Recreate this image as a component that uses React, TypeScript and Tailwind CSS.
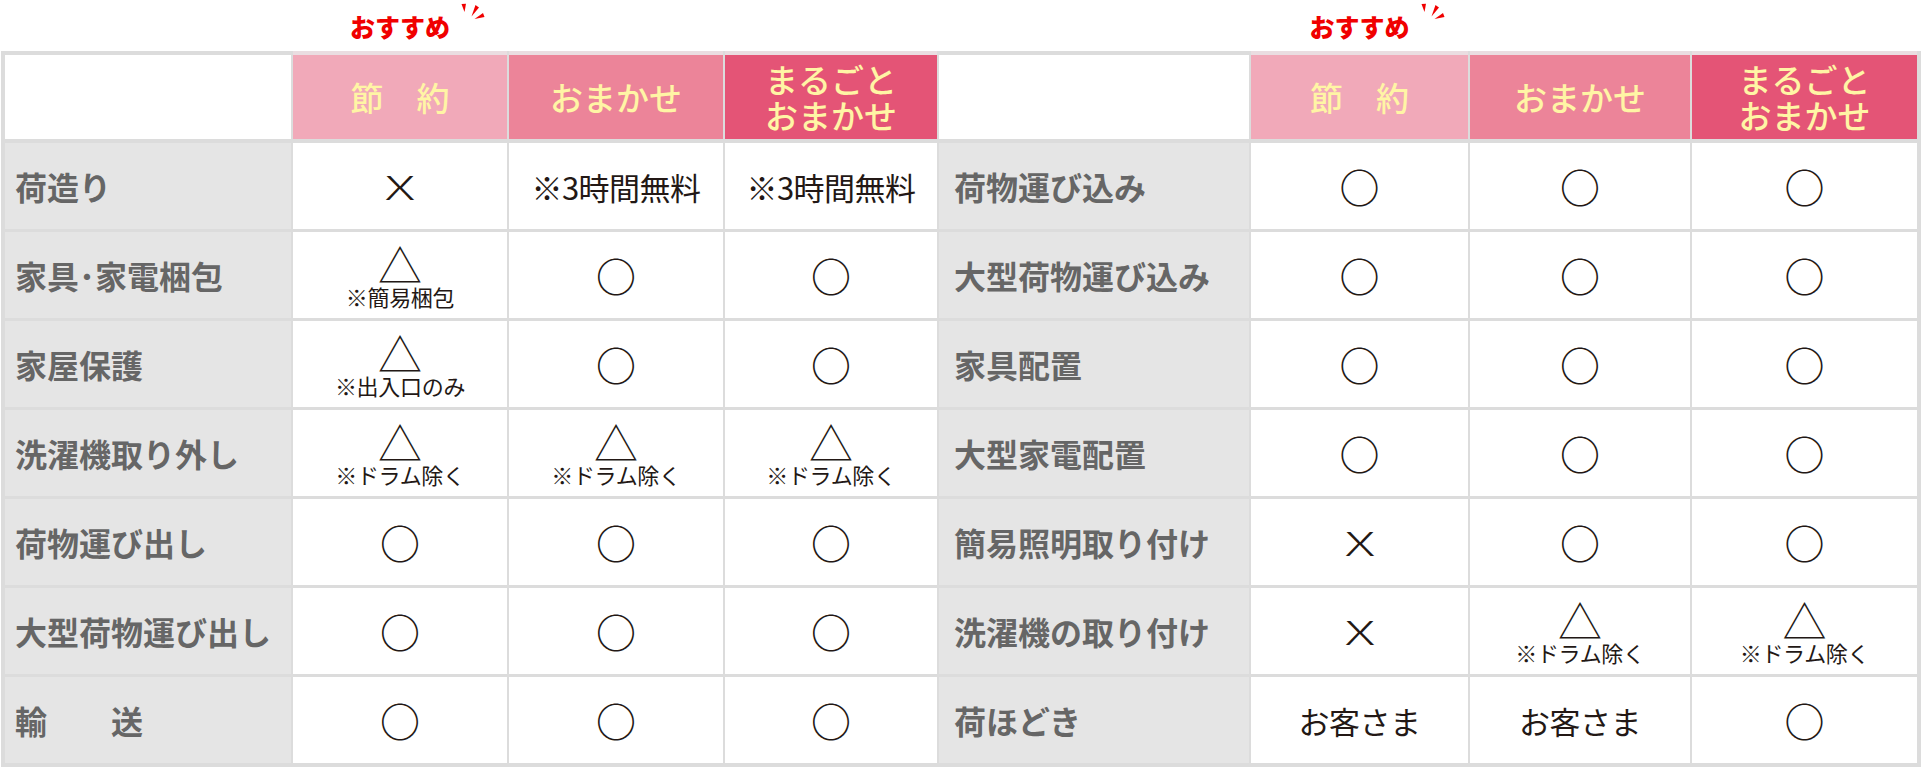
import React from 'react';

// ─── Data ─────────────────────────────────────────────────────────────────────
type Cell =
  | { kind: 'o' }
  | { kind: 'x' }
  | { kind: 't'; note: string }
  | { kind: 'text'; text: string };

const O: Cell = { kind: 'o' };
const X: Cell = { kind: 'x' };
const T = (note: string): Cell => ({ kind: 't', note });
const S = (text: string): Cell => ({ kind: 'text', text });

const LEFT_ROWS: { label: string; cells: Cell[] }[] = [
  { label: '荷造り',         cells: [X, S('※3時間無料'), S('※3時間無料')] },
  { label: '家具･家電梱包',   cells: [T('※簡易梱包'), O, O] },
  { label: '家屋保護',       cells: [T('※出入口のみ'), O, O] },
  { label: '洗濯機取り外し',   cells: [T('※ドラム除く'), T('※ドラム除く'), T('※ドラム除く')] },
  { label: '荷物運び出し',     cells: [O, O, O] },
  { label: '大型荷物運び出し', cells: [O, O, O] },
  { label: '輸　　送',       cells: [O, O, O] },
];

const RIGHT_ROWS: { label: string; cells: Cell[] }[] = [
  { label: '荷物運び込み',     cells: [O, O, O] },
  { label: '大型荷物運び込み', cells: [O, O, O] },
  { label: '家具配置',       cells: [O, O, O] },
  { label: '大型家電配置',     cells: [O, O, O] },
  { label: '簡易照明取り付け', cells: [X, O, O] },
  { label: '洗濯機の取り付け', cells: [X, T('※ドラム除く'), T('※ドラム除く')] },
  { label: '荷ほどき',       cells: [S('お客さま'), S('お客さま'), O] },
];

const COLS = 'grid grid-cols-[286px_214px_214px_212px_310px_217px_220px_225px] gap-x-[2px]';
const FONT = "[font-family:'Noto_Sans_CJK_JP','Noto_Sans',sans-serif]";

// ─── Pieces ───────────────────────────────────────────────────────────────────
function Recommend() {
  return (
    <span className="relative text-[25px] leading-none font-black text-[#f00000]">
      おすすめ
      <svg
        className="absolute left-[calc(100%+7px)] -top-[12px]"
        width="30"
        height="20"
        viewBox="0 0 30 20"
      >
        <polygon points="7.5,10 4.5,2 9,1.8" fill="#f00000" />
        <polygon points="14.5,14.5 18.5,3 22,5.5" fill="#f00000" />
        <polygon points="17.5,17 26,11 27.5,15" fill="#f00000" />
      </svg>
    </span>
  );
}

function Mark({ cell }: { cell: Cell }) {
  if (cell.kind === 'o') {
    return <span className="text-[40px] leading-none font-medium text-[#231815]">○</span>;
  }
  if (cell.kind === 'x') {
    return <span className="inline-block text-[33px] leading-none font-light text-[#231815] scale-x-[1.7]">X</span>;
  }
  if (cell.kind === 't') {
    return (
      <div className="flex flex-col items-center pt-[2px]">
        <span className="text-[44px] leading-[40px] font-light text-[#231815]">△</span>
        <span className="text-[22px] leading-[24px] text-[#231815] tracking-[-0.3px]">{cell.note}</span>
      </div>
    );
  }
  return <span className="text-[31px] leading-none text-[#231815] tracking-[-0.5px]">{cell.text}</span>;
}

function HeadCell({ bg, children }: { bg: string; children: React.ReactNode }) {
  return (
    <div className={`${bg} -mt-[4px] border-t-4 border-[#eadde1] flex items-center justify-center text-center text-[33px] leading-[36px] font-medium text-[#fff5a5]`}>
      {children}
    </div>
  );
}

// ─── Table ────────────────────────────────────────────────────────────────────
export default function App() {
  return (
    <div className={`w-[1922px] h-[778px] bg-white ${FONT}`}>
      {/* おすすめ labels above the 節約 columns */}
      <div className={`${COLS} h-[51px] pl-[5px] items-center`}>
        <div />
        <div className="flex justify-center pt-[1px]"><Recommend /></div>
        <div />
        <div />
        <div />
        <div className="flex justify-center pt-[1px]"><Recommend /></div>
      </div>

      <div className="ml-[1px] w-fit bg-[#dcdcdc] p-[4px] flex flex-col gap-[4px]">
        {/* Header */}
        <div className={`${COLS} h-[84px]`}>
          <div className="bg-white" />
          <HeadCell bg="bg-[#f1a9b9]">節　約</HeadCell>
          <HeadCell bg="bg-[#ec8499]">おまかせ</HeadCell>
          <HeadCell bg="bg-[#e45476]">まるごと<br />おまかせ</HeadCell>
          <div className="bg-white" />
          <HeadCell bg="bg-[#f1a9b9]">節　約</HeadCell>
          <HeadCell bg="bg-[#ec8499]">おまかせ</HeadCell>
          <HeadCell bg="bg-[#e45476]">まるごと<br />おまかせ</HeadCell>
        </div>

        {/* Body */}
        <div className={`${COLS} auto-rows-[86px] gap-y-[3px]`}>
          {LEFT_ROWS.map((l, i) => {
            const r = RIGHT_ROWS[i];
            return (
              <React.Fragment key={l.label}>
                <div className="bg-[#e5e5e5] flex items-center pl-[10px] text-[32px] font-bold text-[#666666]">
                  {l.label}
                </div>
                {l.cells.map((c, j) => (
                  <div key={'l' + j} className="bg-white flex items-center justify-center">
                    <Mark cell={c} />
                  </div>
                ))}
                <div className="bg-[#e5e5e5] flex items-center pl-[15px] text-[32px] font-bold text-[#666666]">
                  {r.label}
                </div>
                {r.cells.map((c, j) => (
                  <div key={'r' + j} className="bg-white flex items-center justify-center">
                    <Mark cell={c} />
                  </div>
                ))}
              </React.Fragment>
            );
          })}
        </div>
      </div>
    </div>
  );
}
